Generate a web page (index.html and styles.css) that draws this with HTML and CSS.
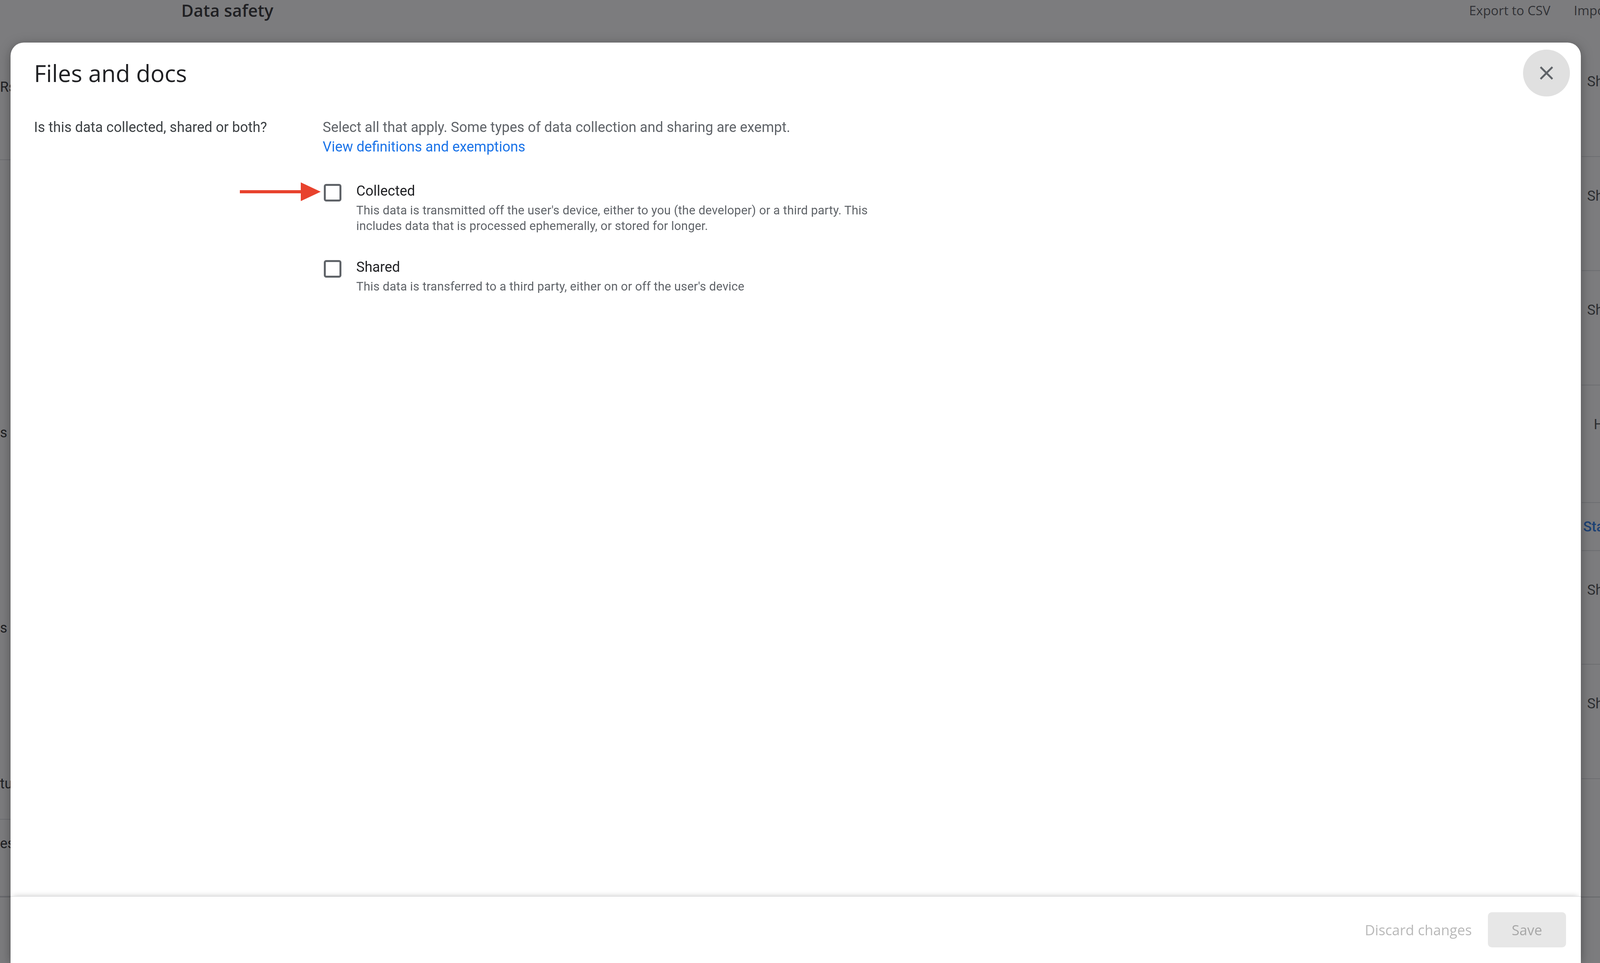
FILE: index.html
```html
<!DOCTYPE html>
<html lang="en">
<head>
  <meta charset="UTF-8">
  <meta name="viewport" content="width=device-width, initial-scale=1.0">
  <title>Data safety - Files and docs</title>
  <link rel="stylesheet" href="styles.css">
</head>
<body>
  <!-- page behind the dialog -->
  <div class="page">
    <header class="page-header">
      <h2 class="page-title">Data safety</h2>
      <div class="page-actions">
        <button class="page-btn">Export to CSV</button>
        <button class="page-btn import">Import from CSV</button>
      </div>
    </header>
    <div class="page-body">
      <div class="edge-left">
        <div class="left-row first"><span>Rs</span></div>
        <div class="left-row tall">
          <span class="l1">s</span>
          <span class="l2">s</span>
          <span class="l3">tus</span>
        </div>
        <div class="left-row short"><span>es</span></div>
      </div>
      <div class="edge-right">
        <div class="right-row" style="height: 293px"><span>Show</span></div>
        <div class="right-row" style="height: 292px"><span>Show</span></div>
        <div class="right-row" style="height: 293px"><span>Show</span></div>
        <div class="right-row indent" style="height: 301px"><span>Hide</span></div>
        <div class="right-row link" style="height: 123px"><span>Start</span></div>
        <div class="right-row" style="height: 291px"><span>Show</span></div>
        <div class="right-row" style="height: 293px"><span>Show</span></div>
      </div>
    </div>
  </div>
  <div class="page-footer"></div>

  <div class="scrim"></div>

  <div class="dialog">
    <div class="dialog-header">
      <h1 class="dialog-title">Files and docs</h1>
      <button class="close-btn" aria-label="Close">
        <svg viewBox="0 0 24 24" width="58" height="58"><path d="M19 6.41L17.59 5 12 10.59 6.41 5 5 6.41 10.59 12 5 17.59 6.41 19 12 13.41 17.59 19 19 17.59 13.41 12z"/></svg>
      </button>
    </div>

    <div class="dialog-body">
      <p class="question">Is this data collected, shared or both?</p>
      <div class="answer">
        <p class="hint">Select all that apply. Some types of data collection and sharing are exempt.
          <a href="#">View definitions and exemptions</a>
        </p>
        <div class="options">
          <label class="option">
            <svg class="arrow" viewBox="0 0 207 50" width="207" height="50">
              <rect x="0" y="21" width="160" height="8"/>
              <polygon points="156,1 207,25 156,49"/>
            </svg>
            <input type="checkbox" class="checkbox">
            <span class="option-text">
              <span class="option-label">Collected</span>
              <span class="option-desc">This data is transmitted off the user's device, either to you (the developer) or a third party. This includes data that is processed ephemerally, or stored for longer.</span>
            </span>
          </label>
          <label class="option">
            <input type="checkbox" class="checkbox">
            <span class="option-text">
              <span class="option-label">Shared</span>
              <span class="option-desc">This data is transferred to a third party, either on or off the user's device</span>
            </span>
          </label>
        </div>
      </div>
    </div>

    <div class="dialog-footer">
      <button class="btn-text" disabled>Discard changes</button>
      <button class="btn-save" disabled>Save</button>
    </div>
  </div>
</body>
</html>
```

FILE: styles.css
```css
* {
  box-sizing: border-box;
}
html, body {
  margin: 0;
  height: 100%;
  overflow: hidden;
}
body {
  font-family: Roboto, "Liberation Sans", sans-serif;
  background-color: #fff;
  color: #202124;
}

/* page behind */
.page {
  height: 100vh;
  overflow: hidden;
  display: flex;
  flex-direction: column;
}
.page-header {
  height: 109px;
  flex: none;
  display: flex;
  align-items: flex-start;
  justify-content: space-between;
  padding-left: 464px;
  overflow: hidden;
}
.page-title {
  margin: 0;
  font-family: "Open Sans", sans-serif;
  font-weight: 600;
  font-size: 43px;
  line-height: 54px;
  color: #202124;
}
.page-actions {
  display: flex;
}
.page-btn {
  font-family: "Open Sans", sans-serif;
  font-size: 33px;
  line-height: 54px;
  color: #4a4d51;
  background: none;
  border: none;
  padding: 0 30px;
  white-space: nowrap;
}
.page-btn.import {
  width: 97px;
  padding-right: 0;
  overflow: hidden;
  text-align: left;
}
.page-body {
  flex: 1;
  min-height: 0;
  display: flex;
  justify-content: space-between;
  overflow: hidden;
}
.edge-left {
  width: 27px;
  overflow: hidden;
  display: flex;
  flex-direction: column;
  font-size: 36px;
  line-height: 44px;
  color: #202124;
  white-space: nowrap;
}
.left-row {
  flex: none;
  border-bottom: 2px solid #dadce0;
}
.left-row.first {
  height: 301px;
  padding-top: 92px;
}
.left-row.tall {
  height: 1689px;
  display: flex;
  flex-direction: column;
  padding-top: 676px;
}
.left-row .l2 {
  margin-top: 456px;
}
.left-row .l3 {
  margin-top: 355px;
}
.left-row.short {
  height: 197px;
  padding-top: 39px;
}
.edge-right {
  width: 47px;
  overflow: hidden;
  display: flex;
  flex-direction: column;
  font-size: 36px;
  line-height: 44px;
  color: #3c4043;
  white-space: nowrap;
}
.right-row {
  flex: none;
  border-bottom: 2px solid #dadce0;
  padding: 78px 0 0 14px;
}
.right-row.indent {
  padding-left: 31px;
}
.right-row.link {
  padding: 0 0 0 4px;
  display: flex;
  align-items: center;
  color: #1a73e8;
  font-weight: 500;
}
.page-footer {
  position: fixed;
  left: 0;
  right: 0;
  bottom: 0;
  height: 170px;
  background-color: #fff;
  border-top: 2px solid #c8cacd;
}

.scrim {
  position: fixed;
  inset: 0;
  background-color: rgba(32, 33, 36, 0.59);
}

/* dialog */
.dialog {
  position: fixed;
  top: 109px;
  left: 27px;
  right: 49px;
  bottom: 0;
  background-color: #fff;
  border-radius: 34px 34px 0 0;
  box-shadow: 0 6px 30px rgba(0, 0, 0, 0.35);
  display: flex;
  flex-direction: column;
}
.dialog-header {
  display: flex;
  align-items: center;
  justify-content: space-between;
  padding: 18px 28px 0 60px;
}
.dialog-title {
  margin: 0;
  font-family: "Open Sans", sans-serif;
  font-weight: 400;
  font-size: 60px;
  line-height: 80px;
  color: #202124;
}
.close-btn {
  width: 120px;
  height: 120px;
  border-radius: 50%;
  border: none;
  padding: 0;
  background-color: #e0e0e0;
  display: grid;
  place-items: center;
  cursor: pointer;
}
.close-btn svg {
  fill: #5f6368;
}

.dialog-body {
  flex: 1;
  padding: 54px 60px 0;
  display: grid;
  grid-template-columns: 739px 1fr;
  align-content: start;
}
.question {
  margin: 0;
  font-size: 36px;
  line-height: 50px;
  color: #3c4043;
}
.hint {
  margin: 0;
  font-size: 36px;
  line-height: 50px;
  color: #5f6368;
}
.hint a {
  display: block;
  color: #1a73e8;
  text-decoration: none;
}
.options {
  margin-top: 63px;
  display: flex;
  flex-direction: column;
  gap: 60px;
}
.option {
  position: relative;
  display: flex;
  gap: 38px;
  padding-left: 3px;
  cursor: pointer;
}
.checkbox {
  appearance: none;
  -webkit-appearance: none;
  flex: none;
  width: 45px;
  height: 45px;
  margin: 7px 0 0;
  border: 5px solid #5f6368;
  border-radius: 6px;
  background: #fff;
}
.option-text {
  display: flex;
  flex-direction: column;
}
.option-label {
  font-size: 36px;
  line-height: 50px;
  color: #202124;
}
.option-desc {
  margin-top: 5px;
  max-width: 1360px;
  font-size: 31px;
  line-height: 40px;
  letter-spacing: 0.2px;
  color: #5f6368;
}
.arrow {
  position: absolute;
  right: 100%;
  top: 2px;
  margin-right: 5px;
  fill: #e8422d;
}

.dialog-footer {
  display: flex;
  justify-content: flex-end;
  align-items: center;
  gap: 17px;
  padding: 40px 38px 40px;
  border-top: 1px solid #d6d7d9;
  box-shadow: 0 -8px 14px -8px rgba(0, 0, 0, 0.22);
}
.btn-text,
.btn-save {
  height: 90px;
  font-family: "Open Sans", sans-serif;
  font-size: 36px;
  border: none;
  border-radius: 10px;
}
.btn-text {
  padding: 0 24px;
  background: none;
  color: #b9b9b9;
}
.btn-save {
  width: 200px;
  padding: 0;
  background-color: #e7e7e7;
  color: #a7a7a7;
}
```
